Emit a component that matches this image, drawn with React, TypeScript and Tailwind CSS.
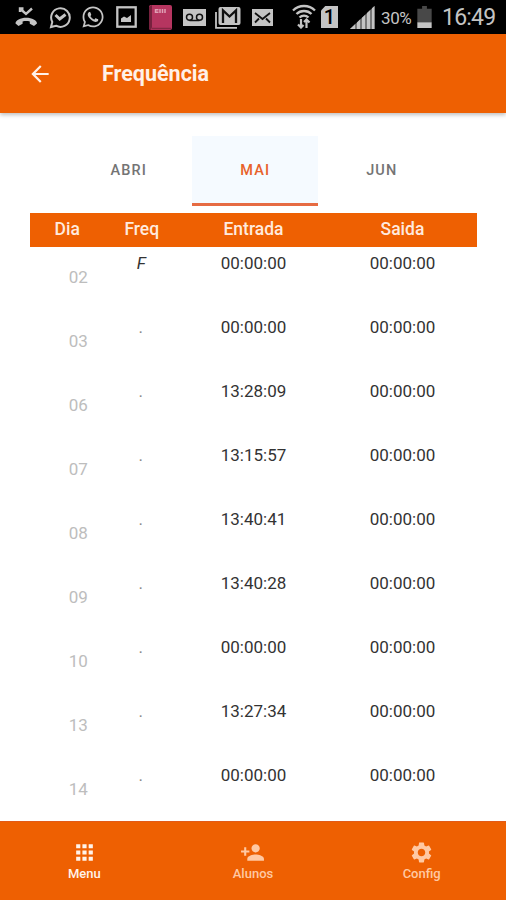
import { MdApps, MdArrowBack, MdPersonAdd, MdSettings } from 'react-icons/md';
import { FaWhatsapp } from 'react-icons/fa';

const rows = [
  { dia: '02', freq: 'F', entrada: '00:00:00', saida: '00:00:00' },
  { dia: '03', freq: '.', entrada: '00:00:00', saida: '00:00:00' },
  { dia: '06', freq: '.', entrada: '13:28:09', saida: '00:00:00' },
  { dia: '07', freq: '.', entrada: '13:15:57', saida: '00:00:00' },
  { dia: '08', freq: '.', entrada: '13:40:41', saida: '00:00:00' },
  { dia: '09', freq: '.', entrada: '13:40:28', saida: '00:00:00' },
  { dia: '10', freq: '.', entrada: '00:00:00', saida: '00:00:00' },
  { dia: '13', freq: '.', entrada: '13:27:34', saida: '00:00:00' },
  { dia: '14', freq: '.', entrada: '00:00:00', saida: '00:00:00' },
];

function StatusBar() {
  return (
    <div className="flex h-[34px] shrink-0 items-center bg-black pl-[15px] text-[#c4c4c4]">
      {/* Missed call */}
      <svg width="23" height="20" viewBox="0 0 23 20" fill="none" stroke="currentColor">
        <path d="M5.500 2l5.500 5 6-5.500M5 5V1.500h3.500" strokeWidth="2.400" />
        <path d="M.5 16.500c0-3.200 5-5.700 10.700-5.700S22 13.300 22 16.500L19 19l-4.200-2.300v-2.200c-2.300-.6-4.900-.6-7.200 0v2.200L3.500 19z" fill="currentColor" stroke="none" />
      </svg>
      {/* Messenger */}
      <svg className="ml-[11px]" width="23" height="23" viewBox="0 0 23 23" fill="none" stroke="currentColor">
        <path d="M2 21l1.300-5A9.300 9.300 0 1 1 7 19.700z" strokeWidth="2" />
        <path d="M6.500 9l4.200 4L16.500 8.500" strokeWidth="3" />
      </svg>
      <FaWhatsapp size={24} className="ml-[9px]" />
      {/* Gallery */}
      <svg className="ml-[11px]" width="21" height="22" viewBox="0 0 21 22">
        <rect x="1.300" y="1.300" width="18.400" height="19.400" fill="none" stroke="currentColor" strokeWidth="2.300" />
        <path d="M5 16v-3.500l3-2 3 1.500 4-3V16z" fill="currentColor" />
      </svg>
      {/* Book */}
      <svg className="ml-[11px]" width="25" height="27" viewBox="0 0 25 27">
        <rect x="1" y="1" width="23" height="25" rx="2" fill="#b63560" />
        <path d="M1 3l3-2v22l-1 3c-1 0-2-1-2-2z" fill="#77213e" />
        <path d="M4 24.500h19" stroke="#842744" strokeWidth="1.500" />
        <path d="M7.500 5v4M7.500 5.700h3M7.500 8.300h3M12 5v4M14.500 5v4M17 5v4" stroke="#dfa0b4" strokeWidth="1.500" />
      </svg>
      {/* Voicemail */}
      <svg className="ml-[10px]" width="23" height="17" viewBox="0 0 23 17">
        <rect width="23" height="17" fill="currentColor" />
        <g fill="none" stroke="#111" strokeWidth="1.500">
          <circle cx="6.500" cy="8.300" r="3" />
          <circle cx="16.500" cy="8.300" r="3" />
          <path d="M6.500 11.500h10" />
        </g>
      </svg>
      {/* Gmail */}
      <svg className="ml-[9px]" width="26" height="23" viewBox="0 0 26 23">
        <path d="M1 6v15.800h21" fill="none" stroke="currentColor" strokeWidth="1.800" />
        <rect x="3.500" y="1" width="22" height="18" rx="2" fill="currentColor" />
        <path d="M8 17V4.500l6.500 6 6.500-6V17" fill="none" stroke="#111" strokeWidth="2.300" />
      </svg>
      {/* Mail */}
      <svg className="ml-[11px]" width="21" height="17" viewBox="0 0 21 17">
        <rect width="21" height="17" fill="currentColor" />
        <path d="M3 4l7.500 6L18 4M3 13.500l4-4M18 13.500l-4-4" fill="none" stroke="#111" strokeWidth="1.800" />
      </svg>
      {/* Wi-Fi */}
      <svg className="ml-[19px] -mt-[2px]" width="24" height="25" viewBox="0 0 24 25" fill="none" stroke="currentColor">
        <path d="M1 6.500c6-6 16-6 22 0M4.500 10c4-4 11-4 15 0M7.500 13.500c2.500-2.500 6.500-2.500 9 0" strokeWidth="2.300" />
        <path d="M9 15v8.500M6 20.500l3 3 2.500-2.500M14.500 24v-8.500M12 18l2.500-2.500 3 3" strokeWidth="2.200" />
      </svg>
      {/* SIM card */}
      <div className="ml-[5px] flex h-[22px] w-[17px] items-center justify-center bg-[#c4c4c4] text-[20px] font-medium text-black [clip-path:polygon(25%_0,100%_0,100%_100%,0_100%,0_20%)]">
        1
      </div>
      {/* Signal */}
      <svg className="ml-[12px]" width="25" height="23" viewBox="0 0 25 23">
        <path d="M0 23L24.500 0v23z" fill="#777" />
        <path d="M0 23l5-4.700V23zM7 23v-6.600l3-2.800V23zM12 23V11.700l3-2.800V23zM17 23V7l3-2.800V23zM22 23V2.300L24.500 0v23z" fill="currentColor" />
      </svg>
      <span className="ml-[6px] w-[35px] pt-[3px] text-[17px] tracking-[-0.400px]">30%</span>
      {/* Battery */}
      <svg className="ml-px" width="15" height="22" viewBox="0 0 15 23">
        <path d="M0 3h5V0h5v3h5v14H0z" fill="#484848" />
        <path d="M0 17h15v6H0z" fill="currentColor" />
      </svg>
      <span className="ml-[10px] pt-[3px] text-[23px] tracking-[-0.800px]">16:49</span>
    </div>
  );
}

function Tab({ label, active }: { label: string; active?: boolean }) {
  return (
    <div
      className={
        active
          ? 'flex h-[70px] w-[126.500px] items-center justify-center border-b-3 border-[#e66b43] bg-[#f5faff] pt-[2px] text-[#e8612a]'
          : 'flex h-[70px] w-[126.500px] items-center justify-center pb-px text-[#747474]'
      }
    >
      <span className="pl-px text-[14.500px] font-medium tracking-[1.100px]">{label}</span>
    </div>
  );
}

export default function App() {
  return (
    <div className="flex h-[900px] w-[506px] flex-col overflow-hidden bg-white font-['Roboto',sans-serif]">
      <StatusBar />

      {/* Header */}
      <header className="flex h-[79px] shrink-0 items-center bg-[#ee6002] pl-[27px] text-[#fff1e8] shadow-[0_2px_4px_rgba(0,0,0,0.25)]">
        <MdArrowBack size={26} />
        <h1 className="ml-[49px] pt-[2px] text-[21.500px] font-bold">Frequência</h1>
      </header>

      <main className="flex-1 overflow-hidden pt-[23px]">
        {/* Months */}
        <div className="flex pl-[65px]">
          <Tab label="ABRI" />
          <Tab label="MAI" active />
          <Tab label="JUN" />
        </div>

        {/* Attendance table */}
        <div className="mt-[7px] ml-[30px] w-[447px]">
          <div className="grid h-[33.500px] grid-cols-6 items-center bg-[#ee6002] pb-px text-center text-[17.500px] font-medium text-[#ffeade]">
            <span>Dia</span>
            <span>Freq</span>
            <span className="col-span-2">Entrada</span>
            <span className="col-span-2">Saida</span>
          </div>
          {rows.map((row) => (
            <div key={row.dia} className="grid h-[64.060px] grid-cols-6 pt-1 text-center text-[17px] text-[#333]">
              <span className="pt-[14px] pl-[22px] text-[#bdbdbd]">{row.dia}</span>
              <span className={row.freq === 'F' ? 'pr-px italic' : 'pr-[2px] text-[#888]'}>{row.freq}</span>
              <span className="col-span-2">{row.entrada}</span>
              <span className="col-span-2">{row.saida}</span>
            </div>
          ))}
        </div>
      </main>

      {/* Bottom navigation */}
      <nav className="grid h-[79px] shrink-0 grid-cols-3 border-t border-[#e25a18] bg-[#ee6002] pt-[18px] text-[13px] leading-[18px] font-medium text-[#ffc9a3]">
        <div className="flex flex-col items-center text-[#fff3eb]">
          <MdApps size={25} />
          <span>Menu</span>
        </div>
        <div className="flex flex-col items-center">
          <MdPersonAdd size={25} />
          <span>Alunos</span>
        </div>
        <div className="flex flex-col items-center">
          <MdSettings size={25} />
          <span>Config</span>
        </div>
      </nav>
    </div>
  );
}
